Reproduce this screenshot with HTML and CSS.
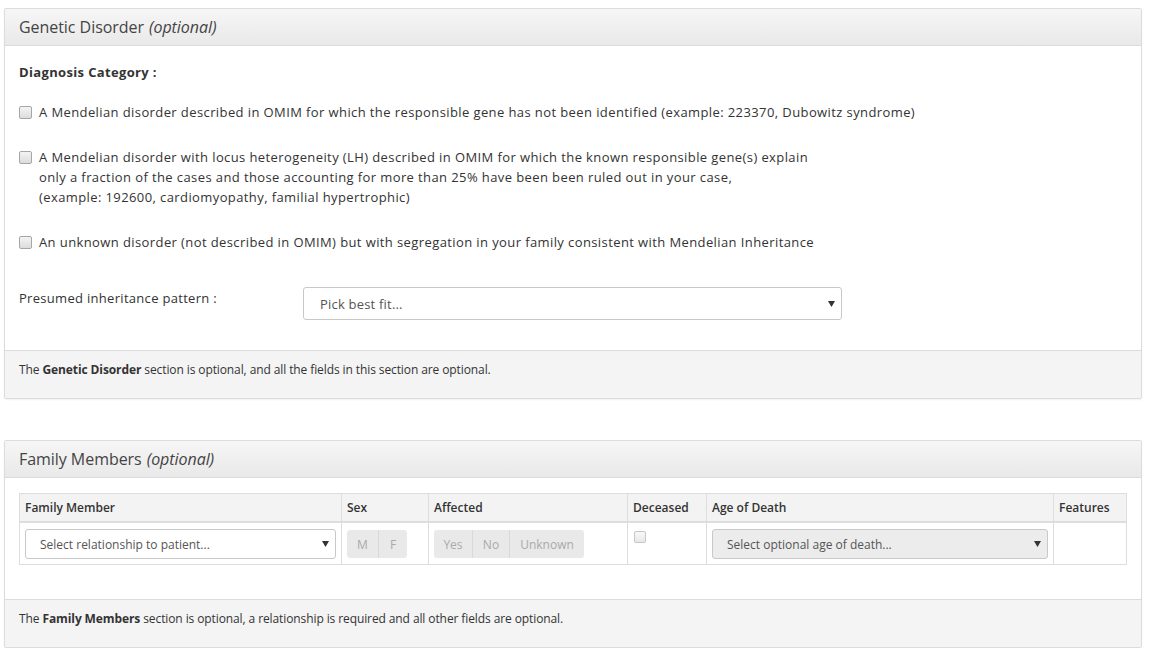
FILE: index.html
```html
<!DOCTYPE html>
<html>
<head>
<meta charset="utf-8">
<link rel="stylesheet" href="styles.css">
</head>
<body>
<div class="page">
  <section class="panel">
    <div class="panel-heading">Genetic Disorder <em>(optional)</em></div>
    <div class="panel-body">
      <div class="cat-label">Diagnosis Category :</div>
      <label class="check-row first"><span class="cb"></span><span class="check-text">A Mendelian disorder described in OMIM for which the responsible gene has not been identified (example: 223370, Dubowitz syndrome)</span></label>
      <label class="check-row"><span class="cb"></span><span class="check-text">A Mendelian disorder with locus heterogeneity (LH) described in OMIM for which the known responsible gene(s) explain<br>only a fraction of the cases and those accounting for more than 25% have been been ruled out in your case,<br>(example: 192600, cardiomyopathy, familial hypertrophic)</span></label>
      <label class="check-row"><span class="cb"></span><span class="check-text">An unknown disorder (not described in OMIM) but with segregation in your family consistent with Mendelian Inheritance</span></label>
      <div class="form-row">
        <div class="form-label">Presumed inheritance pattern :</div>
        <div class="select select-lg"><span class="select-text">Pick best fit...</span><svg class="caret" width="7" height="6" viewBox="0 0 7 6"><path d="M0 0H7L3.5 6Z" fill="#333"/></svg></div>
      </div>
    </div>
    <div class="panel-footer">The <b>Genetic Disorder</b> section is optional, and all the fields in this section are optional.</div>
  </section>

  <section class="panel panel-2">
    <div class="panel-heading">Family Members <em>(optional)</em></div>
    <div class="panel-body body-table">
      <table class="fam-table">
        <thead>
          <tr>
            <th class="c1">Family Member</th>
            <th class="c2">Sex</th>
            <th class="c3">Affected</th>
            <th class="c4">Deceased</th>
            <th class="c5">Age of Death</th>
            <th class="c6">Features</th>
          </tr>
        </thead>
        <tbody>
          <tr>
            <td><div class="select select-sm"><span class="select-text">Select relationship to patient...</span><svg class="caret" width="7" height="6" viewBox="0 0 7 6"><path d="M0 0H7L3.5 6Z" fill="#333"/></svg></div></td>
            <td><div class="btn-group"><span class="btn b-m">M</span><span class="btn b-f">F</span></div></td>
            <td><div class="btn-group"><span class="btn b-yes">Yes</span><span class="btn b-no">No</span><span class="btn b-unk">Unknown</span></div></td>
            <td class="td-check"><span class="cb cb-dis"></span></td>
            <td><div class="select select-sm select-dis"><span class="select-text">Select optional age of death...</span><svg class="caret" width="7" height="6" viewBox="0 0 7 6"><path d="M0 0H7L3.5 6Z" fill="#333"/></svg></div></td>
            <td></td>
          </tr>
        </tbody>
      </table>
    </div>
    <div class="panel-footer">The <b>Family Members</b> section is optional, a relationship is required and all other fields are optional.</div>
  </section>
</div>
</body>
</html>
```

FILE: styles.css
```css
* { box-sizing: border-box; }
html, body { margin: 0; padding: 0; background: #fff; }
body {
  font-family: "Open Sans", "Noto Sans", sans-serif;
  font-size: 13px;
  color: #333;
}
.page {
  padding: 8px 9px 0 4px;
}
.panel {
  border: 1px solid #dcdcdc;
  border-radius: 2px;
  box-shadow: 0 1px 2px rgba(0,0,0,0.06);
  background: #fff;
}
.panel-2 { margin-top: 41px; }
.panel-heading {
  height: 37px;
  padding: 0 14px;
  display: flex;
  align-items: center;
  font-size: 16px;
  color: #444;
  background: linear-gradient(#f6f6f6, #e9e9e9);
  border-bottom: 1px solid #dcdcdc;
  letter-spacing: -0.05px;
}
.panel-heading em { font-style: italic; margin-left: 5px; }
.panel-body { padding: 16px 14px 30px; }
.cat-label {
  font-weight: 700;
  line-height: 20px;
  font-size: 13px;
  letter-spacing: 0.35px;
}
.check-row {
  display: flex;
  align-items: flex-start;
  margin-top: 25px;
  line-height: 20px;
}
.check-row.first { margin-top: 20px; }
.cb {
  flex: none;
  width: 13px;
  height: 13px;
  margin-top: 4px;
  margin-right: 7px;
  border: 1px solid #a6a6a6;
  border-radius: 2px;
  background: linear-gradient(#f4f4f4, #dcdcdc);
}
.check-text { font-size: 13px; letter-spacing: 0.4px; }
.form-row {
  display: flex;
  align-items: center;
  margin-top: 35px;
}
.form-label {
  width: 284px;
  line-height: 20px;
  padding-bottom: 12px;
  letter-spacing: 0.3px;
}
.select {
  display: flex;
  align-items: center;
  justify-content: space-between;
  border: 1px solid #c8c8c8;
  border-radius: 3px;
  background: #fff;
}
.select-lg {
  width: 539px;
  height: 33px;
  padding: 0 6px 0 16px;
}
.select-text { color: #555; }
.select-lg .select-text { font-size: 13px; letter-spacing: 0.2px; }
.caret { display: block; }
.panel-footer {
  background: #f4f4f4;
  border-top: 1px solid #dcdcdc;
  padding: 9px 14px 18px;
  line-height: 20px;
  font-size: 12px;
  color: #333;
  letter-spacing: -0.1px;
}
.panel-footer b { font-weight: 700; }

.body-table { padding: 15px 14px 34px; }
.fam-table {
  width: 100%;
  border-collapse: collapse;
  table-layout: fixed;
  font-size: 12px;
}
.fam-table th, .fam-table td {
  border: 1px solid #ddd;
  padding: 5px 5px;
  text-align: left;
  vertical-align: top;
}
.fam-table th {
  background: #f3f3f3;
  font-weight: 600;
  height: 28px;
  border-bottom: 2px solid #ddd;
  line-height: 17px;
  color: #333;
}
.fam-table td { height: 42px; padding: 6px 5px 5px; }
.c1 { width: 322px; }
.c2 { width: 87px; }
.c3 { width: 199px; }
.c4 { width: 79px; }
.c5 { width: 347px; }
.select-sm {
  height: 30px;
  padding: 0 6px 0 14px;
  font-size: 12px;
}
.select-dis {
  background: #ececec;
  border-color: #c8c8c8;
}
.btn-group {
  display: inline-flex;
  height: 28px;
  margin-top: 1px;
  border-radius: 3px;
  overflow: hidden;
  background: #e9e9e9;
}
.btn {
  display: flex;
  align-items: center;
  justify-content: center;
  color: #aaa;
  font-size: 12px;
  border-right: 1px solid #d9d9d9;
}
.btn:last-child { border-right: none; }
.b-m { width: 32px; }
.b-f { width: 28px; }
.b-yes { width: 39px; }
.b-no { width: 37px; }
.b-unk { width: 74px; }
.td-check { padding-top: 4px !important; }
.cb-dis {
  display: block;
  margin-left: 1px;
  width: 12px;
  height: 12px;
  border-color: #c6c6c6;
  background: linear-gradient(#f8f8f8, #e8e8e8);
}
```
